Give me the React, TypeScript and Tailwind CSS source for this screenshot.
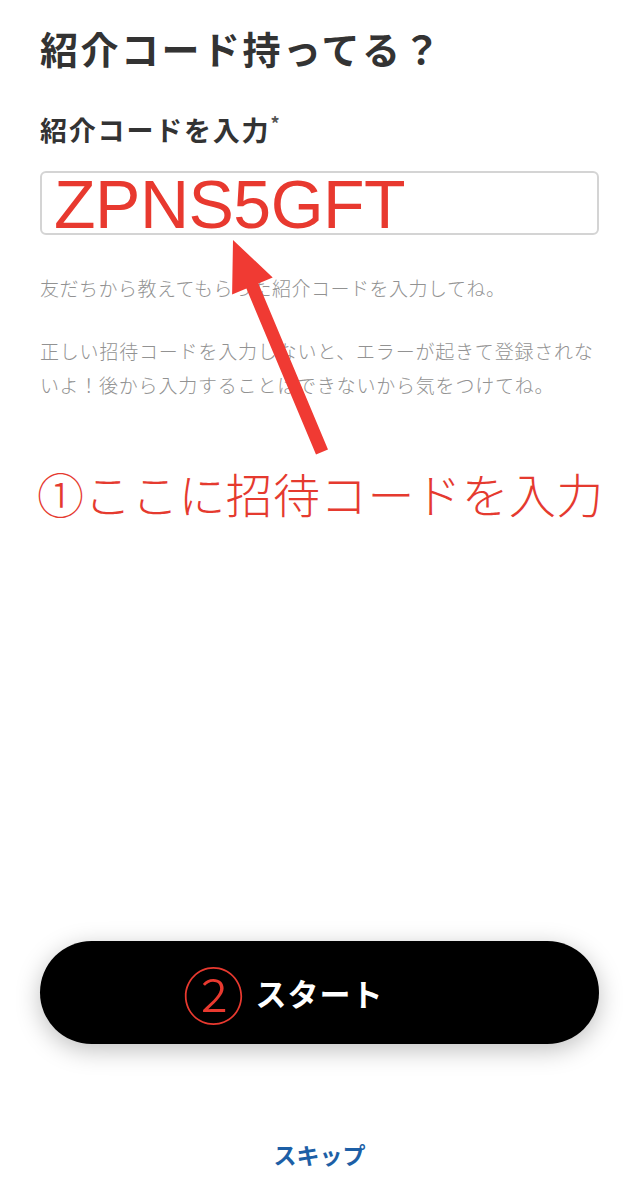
import React from "react";

const jp = { fontFamily: '"Noto Sans CJK JP", "Noto Sans", sans-serif' };

export default function App() {
  return (
    <div className="relative w-[639px] h-[1200px] bg-white overflow-hidden" style={jp}>
      <div className="flex flex-col h-full px-[40px]">
        <h1 className="mt-[25px] text-[38px] leading-[46px] font-bold tracking-[2.5px] text-[#333333]">
          紹介コード持ってる？
        </h1>
        <div className="mt-[42px] flex items-start text-[#333333]">
          <span className="text-[27px] leading-[34px] font-bold tracking-[1.8px]">紹介コードを入力</span>
          <span className="text-[18px] leading-[20px] font-bold text-[#555555]">*</span>
        </div>
        <div className="mt-[24px] h-[64px] w-full rounded-[6px] border-[2px] border-[#d4d4d4] flex items-end overflow-visible pl-[12px]">
          <span
            className="text-[68px] leading-[68px] text-[#e8392f] translate-y-[5px] tracking-[-0.5px]"
            style={{ fontFamily: '"Liberation Sans", Arial, sans-serif' }}
          >
            ZPNS5GFT
          </span>
        </div>
        <p className="mt-[36px] text-[19px] leading-[34px] tracking-[0.5px] font-light text-[#929292]">
          友だちから教えてもらった紹介コードを入力してね。
        </p>
        <p className="mt-[29px] text-[19px] leading-[34px] tracking-[0.8px] font-light text-[#929292]">
          正しい招待コードを入力しないと、エラーが起きて登録されないよ！後から入力することはできないから気をつけてね。
        </p>
        <div className="mt-[63px] -ml-[3px] text-[47px] leading-[56px] font-light tracking-[0.2px] text-[#e53a2f] whitespace-nowrap">
          ①ここに招待コードを入力
        </div>
        <div className="flex-1" />
        <button className="h-[103px] w-full rounded-full bg-black shadow-[0_6px_24px_rgba(0,0,0,0.25)] flex items-center justify-center">
          <span className="relative text-[31px] leading-[40px] font-bold text-white tracking-[1px]">
            <span className="absolute right-full top-1/2 -translate-y-1/2 mr-[10px] text-[62px] leading-[62px] font-light text-[#e8392f]">
              ②
            </span>
            スタート
          </span>
        </button>
        <div className="mt-[94px] mb-[30px] text-center text-[23px] leading-[32px] font-bold text-[#1d5fa6]">
          スキップ
        </div>
      </div>
      <svg
        className="absolute inset-0 pointer-events-none"
        width="639"
        height="1200"
        viewBox="0 0 639 1200"
      >
        <polygon
          points="233,240 272.7,277.5 258.4,283.5 328,449.5 316,454.5 246.4,288.5 232.1,294.5"
          fill="#f03a33"
        />
      </svg>
    </div>
  );
}
